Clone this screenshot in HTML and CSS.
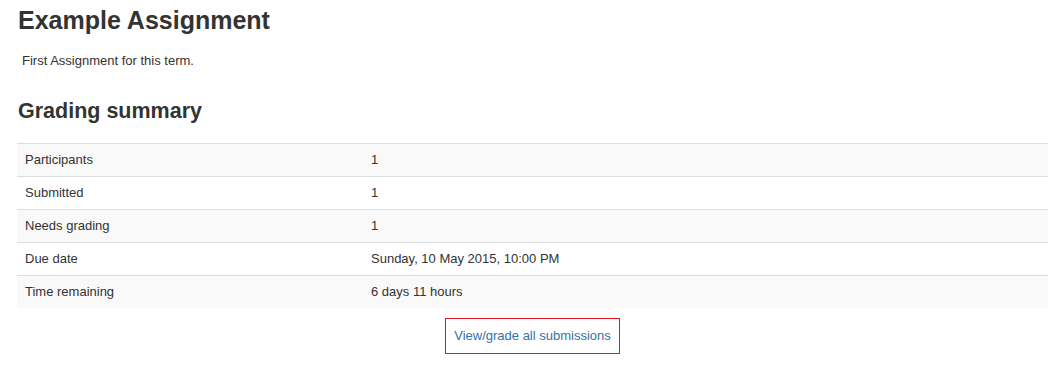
FILE: index.html
```html
<!DOCTYPE html>
<html>
<head>
<meta charset="utf-8">
<link rel="stylesheet" href="styles.css">
</head>
<body>
<div class="page">
  <h1 class="title">Example Assignment</h1>
  <div class="intro"><p>First Assignment for this term.</p></div>
  <h2 class="section">Grading summary</h2>
  <table class="summary">
    <colgroup><col class="c1"><col></colgroup>
    <tbody>
      <tr><td>Participants</td><td>1</td></tr>
      <tr><td>Submitted</td><td>1</td></tr>
      <tr><td>Needs grading</td><td>1</td></tr>
      <tr><td>Due date</td><td>Sunday, 10 May 2015, 10:00 PM</td></tr>
      <tr><td>Time remaining</td><td>6 days 11 hours</td></tr>
    </tbody>
  </table>
  <div class="actions"><a class="grade-btn" href="#">View/grade all submissions</a></div>
</div>
</body>
</html>
```
FILE: styles.css
```css
html, body {
  margin: 0;
  padding: 0;
  background: #fff;
}
body {
  font-family: "Liberation Sans", Arial, sans-serif;
  font-size: 13px;
  color: #333;
}
.page {
  padding: 6px 16px 0 17px;
}
.title {
  margin: 0;
  font-size: 25px;
  line-height: 28px;
  font-weight: bold;
  padding-left: 1px;
}
.intro {
  margin-top: 19px;
  padding-left: 5px;
}
.intro p {
  margin: 0;
  line-height: 16px;
}
.section {
  margin: 30px 0 0 0;
  font-size: 21.5px;
  line-height: 24px;
  font-weight: bold;
  padding-left: 1px;
}
.summary {
  margin-top: 20px;
  width: 100%;
  border-collapse: collapse;
  border-spacing: 0;
}
.summary .c1 {
  width: 346px;
}
.summary td {
  padding: 8px;
  line-height: 16px;
  border-top: 1px solid #ddd;
  vertical-align: top;
  text-align: left;
}
.summary tr:nth-child(odd) td {
  background: #f9f9f9;
}
.actions {
  display: flex;
  justify-content: center;
  margin-top: 10px;
}
.grade-btn {
  display: inline-block;
  border: 1px solid #e3141f;
  padding: 9px 8px;
  line-height: 16px;
  color: #3471a8;
  text-decoration: none;
  font-size: 13px;
}
```
